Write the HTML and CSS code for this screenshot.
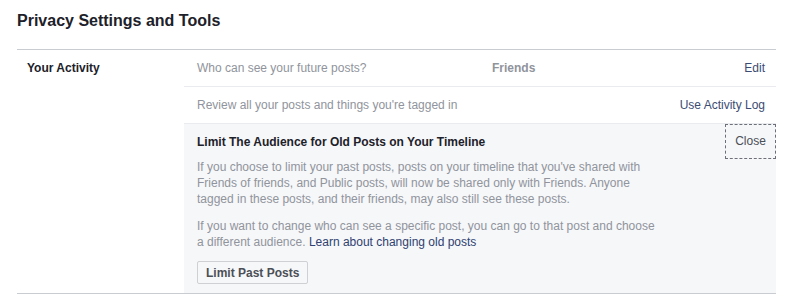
FILE: index.html
```html
<!DOCTYPE html>
<html>
<head>
    <title>Privacy Settings and Tools</title>
    <link rel="stylesheet" href="styles.css">
</head>
<body>
    <div class="page">
        <h1 class="page-title">Privacy Settings and Tools</h1>
        <div class="section">
            <div class="section-label">Your Activity</div>
            <div class="section-body">
                <div class="row">
                    <span class="row-question">Who can see your future posts?</span>
                    <span class="row-value">Friends</span>
                    <a class="row-link" href="#">Edit</a>
                </div>
                <div class="row">
                    <span class="row-question">Review all your posts and things you're tagged in</span>
                    <a class="row-link" href="#">Use Activity Log</a>
                </div>
                <div class="panel">
                    <div class="panel-head">
                        <span class="panel-title">Limit The Audience for Old Posts on Your Timeline</span>
                        <a class="panel-close" href="#">Close</a>
                    </div>
                    <p class="panel-text">If you choose to limit your past posts, posts on your timeline that you've shared with Friends of friends, and Public posts, will now be shared only with Friends. Anyone tagged in these posts, and their friends, may also still see these posts.</p>
                    <p class="panel-text">If you want to change who can see a specific post, you can go to that post and choose a different audience. <a class="panel-learn" href="#">Learn about changing old posts</a></p>
                    <button class="panel-button">Limit Past Posts</button>
                </div>
            </div>
        </div>
    </div>
</body>
</html>
```

FILE: styles.css
```css
body {
    margin: 0;
    background: #fff;
    font-family: 'Liberation Sans', Arial, Helvetica, sans-serif;
    font-size: 12px;
    color: #1d2129;
}
a {
    text-decoration: none;
}
.page {
    width: 759px;
    margin-left: 17px;
}
.page-title {
    margin: 0;
    padding: 11px 0 18px;
    font-size: 16px;
    line-height: 20px;
    font-weight: bold;
    color: #1d2129;
}
.section {
    display: flex;
    border-top: 1px solid #c9ccd1;
    border-bottom: 1px solid #c9ccd1;
}
.section-label {
    width: 157px;
    padding: 10px 0 0 10px;
    line-height: 16px;
    font-weight: bold;
}
.section-body {
    flex: 1;
}
.row {
    display: flex;
    align-items: center;
    padding: 10px 11px 10px 13px;
    line-height: 16px;
    border-bottom: 1px solid #e9ebee;
}
.row-question {
    width: 295px;
    color: #90949c;
    white-space: nowrap;
}
.row-value {
    font-weight: bold;
    color: #90949c;
}
.row-link {
    margin-left: auto;
    color: #3b4c74;
}
.panel {
    background: #f6f7f9;
    padding: 0 0 9px 13px;
}
.panel-head {
    display: flex;
    align-items: center;
    height: 35px;
}
.panel-title {
    font-weight: bold;
    line-height: 16px;
}
.panel-close {
    margin-left: auto;
    width: 49px;
    height: 33px;
    line-height: 33px;
    text-align: center;
    color: #4b4f56;
    border: 1px dashed #6d7079;
}
.panel-text {
    width: 462px;
    margin: 0 0 11px;
    line-height: 16px;
    color: #90949c;
}
.panel-learn {
    color: #2f4170;
}
.panel-button {
    display: block;
    height: 23px;
    padding: 0 8px;
    font-family: inherit;
    font-size: 12px;
    font-weight: bold;
    color: #4b4f56;
    background: #f6f7f9;
    border: 1px solid #ced0d4;
    border-radius: 2px;
}
```
